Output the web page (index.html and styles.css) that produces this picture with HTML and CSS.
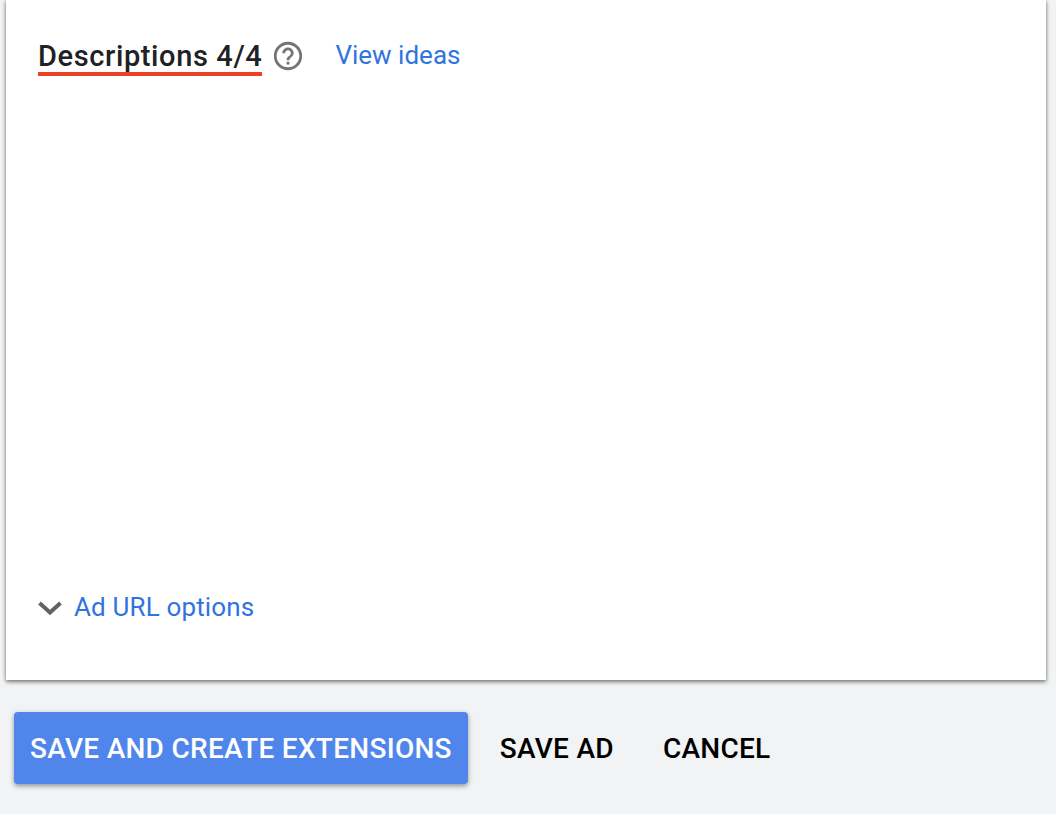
FILE: index.html
```html
<!DOCTYPE html>
<html lang="en">
<head>
    <meta charset="UTF-8">
    <title>Edit ad</title>
    <link rel="stylesheet" href="styles.css">
</head>
<body>
<div class="panel">
    <div class="heading">
        <span class="title">Descriptions 4/4</span>
        <svg class="help" viewBox="0 0 24 24" width="34" height="34">
            <path fill="#757575" d="M11 18h2v-2h-2v2zm1-16C6.48 2 2 6.48 2 12s4.48 10 10 10 10-4.48 10-10S17.52 2 12 2zm0 18c-4.41 0-8-3.59-8-8s3.59-8 8-8 8 3.59 8 8-3.59 8-8 8zm0-14c-2.21 0-4 1.79-4 4h2c0-1.1.9-2 2-2s2 .9 2 2c0 2-3 1.75-3 5h2c0-2.25 3-2.5 3-5 0-2.21-1.79-4-4-4z"/>
        </svg>
        <a href="javascript:;" class="ideas">View ideas</a>
    </div>
    <div class="url-options">
        <svg class="chevron" viewBox="0 0 24 14" width="24" height="14">
            <path fill="none" stroke="#5f6368" stroke-width="4" d="M1.5 2l10.5 9.5L22.5 2"/>
        </svg>
        <a href="javascript:;" class="url-link">Ad URL options</a>
    </div>
</div>
<div class="actions">
    <a href="javascript:;" class="btn primary">SAVE AND CREATE EXTENSIONS</a>
    <a href="javascript:;" class="btn">SAVE AD</a>
    <a href="javascript:;" class="btn cancel">CANCEL</a>
</div>
</body>
</html>
```

FILE: styles.css
```css
html, body {
    height: 100%;
}

body {
    margin: 0;
    overflow: hidden;
    background-color: #f1f3f4;
    font-family: Roboto, "Liberation Sans", sans-serif;
}

a {
    text-decoration: none;
}

.panel {
    display: flex;
    flex-direction: column;
    justify-content: space-between;
    box-sizing: border-box;
    width: 1040px;
    height: 680px;
    margin-left: 6px;
    padding: 36px 32px 54px;
    background-color: white;
    box-shadow: 0 2px 4px rgba(0, 0, 0, 0.45), 0 0 4px rgba(0, 0, 0, 0.2);
}

.heading {
    display: flex;
    align-items: center;
    height: 40px;
}

.title {
    box-sizing: border-box;
    height: 40px;
    line-height: 40px;
    border-bottom: 4px solid #ea4127;
    font-size: 29px;
    letter-spacing: 0.62px;
    font-weight: 500;
    color: #202124;
}

.help {
    margin-left: 9px;
    margin-top: 0;
}

.ideas {
    margin-left: 30px;
    margin-top: -2px;
    font-size: 26px;
    color: #2f74e0;
}

.url-options {
    display: flex;
    align-items: center;
    height: 36px;
}

.chevron {
    margin-right: 12px;
}

.url-link {
    margin-top: -2px;
    font-size: 26px;
    letter-spacing: 0.15px;
    color: #2f74e0;
}

.actions {
    display: flex;
    align-items: center;
    margin-top: 32px;
    margin-left: 14px;
}

.btn {
    padding: 0 16px;
    height: 72px;
    line-height: 73px;
    border-radius: 4px;
    font-size: 28px;
    letter-spacing: 0.28px;
    font-weight: 500;
    color: black;
}

.btn + .btn {
    margin-left: 16px;
}

.btn + .cancel {
    margin-left: 17px;
}

.primary {
    background-color: #5086ec;
    color: white;
    box-shadow: 0 2px 5px rgba(0, 0, 0, 0.4);
}
```
